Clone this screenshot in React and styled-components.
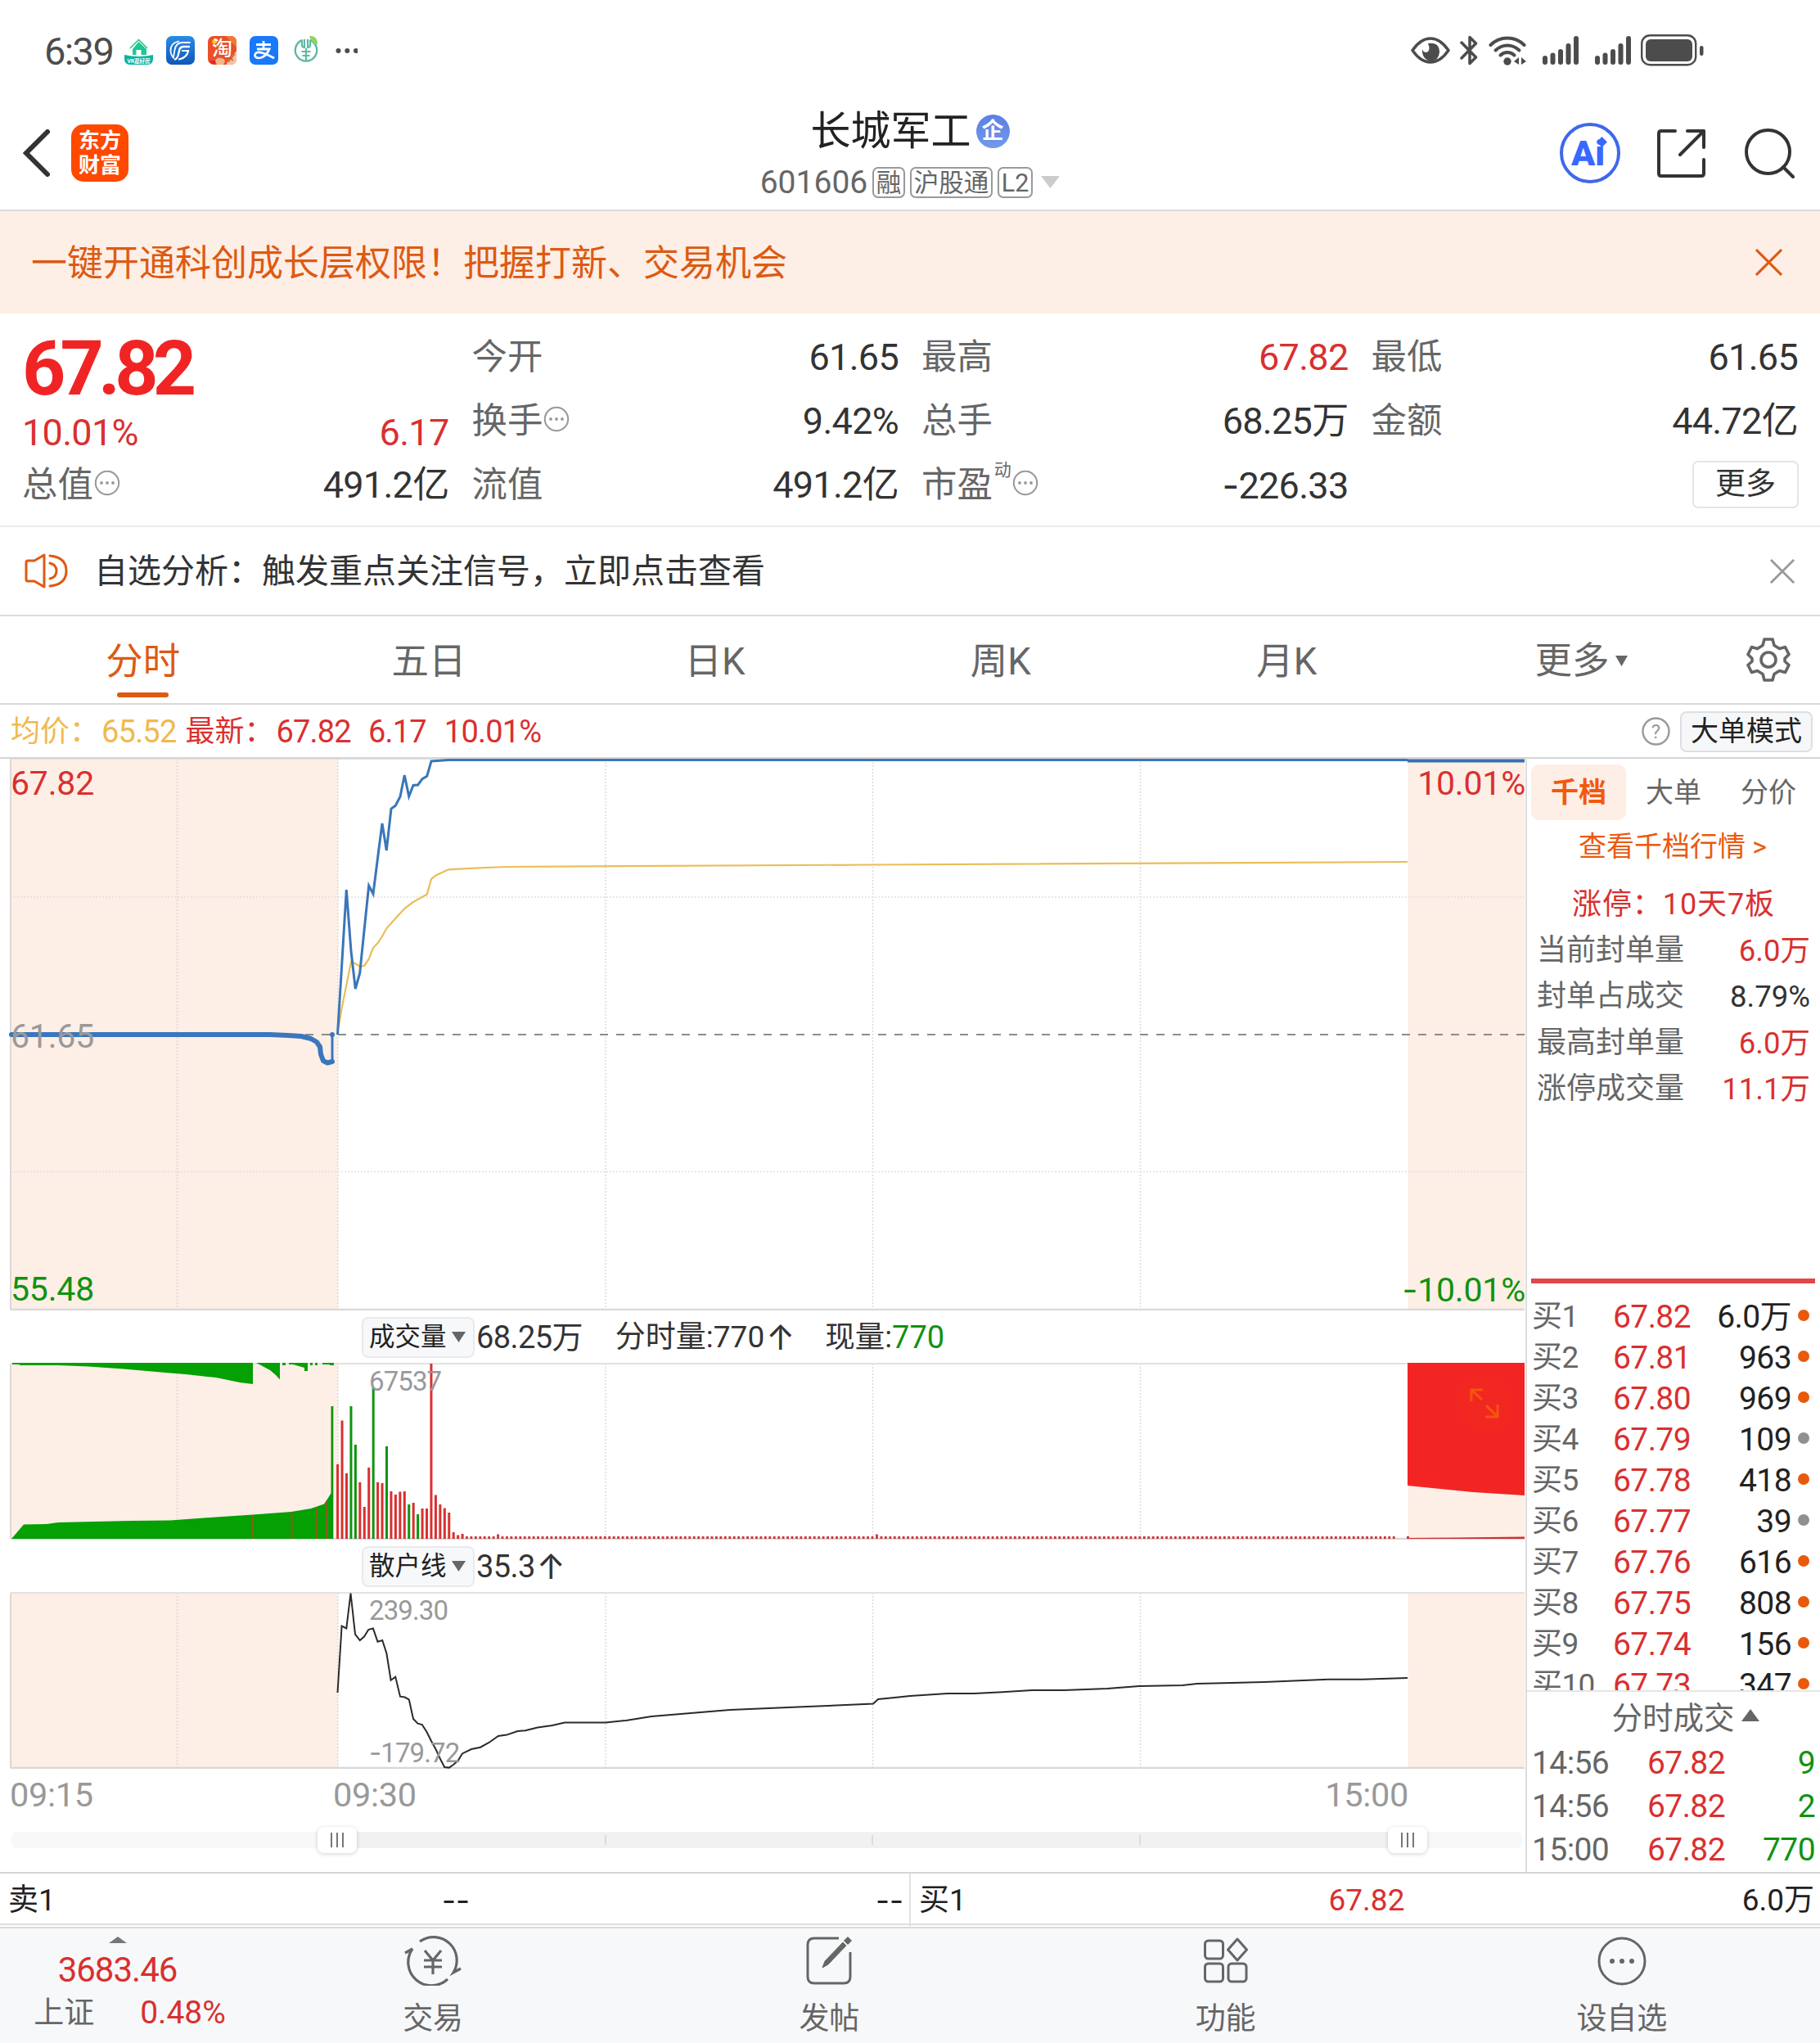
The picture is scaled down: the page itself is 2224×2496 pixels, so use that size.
import styled, { createGlobalStyle } from "styled-components";

const RED = "#d9302f";
const GREEN = "#0f930f";
const ORANGE = "#dd5a12";
const GREY = "#666";
const TINT = "#fdeee6";

const quoteCells = [
  [
    { label: "今开", value: "61.65" },
    { label: "最高", value: "67.82", color: RED },
    { label: "最低", value: "61.65" },
  ],
  [
    { label: "换手", value: "9.42%", more: true },
    { label: "总手", value: "68.25万" },
    { label: "金额", value: "44.72亿" },
  ],
];

const tabs = ["分时", "五日", "日K", "周K", "月K"];

const limitRows = [
  { label: "当前封单量", value: "6.0万", color: RED },
  { label: "封单占成交", value: "8.79%", color: "#333" },
  { label: "最高封单量", value: "6.0万", color: RED },
  { label: "涨停成交量", value: "11.1万", color: RED },
];

const bids = [
  ["买1", "67.82", "6.0万", 1],
  ["买2", "67.81", "963", 1],
  ["买3", "67.80", "969", 1],
  ["买4", "67.79", "109", 0],
  ["买5", "67.78", "418", 1],
  ["买6", "67.77", "39", 0],
  ["买7", "67.76", "616", 1],
  ["买8", "67.75", "808", 1],
  ["买9", "67.74", "156", 1],
  ["买10", "67.73", "347", 1],
];

const trades = [
  ["14:56", "67.82", "9"],
  ["14:56", "67.82", "2"],
  ["15:00", "67.82", "770"],
];

const priceLine =
  "412.5,1264 423.3,1087 429,1162 434.3,1208 439.7,1189 445,1137 450.7,1082 456,1092 461.7,1047 467,1006 472.3,1039 478,988 483.3,984.3 489,973.3 494.3,947 499.7,973 505,959.5 510.7,959 516,951.7 521.7,948.3 527,930 548,928.5 1720,928.5";
const avgLine =
  "413.7,1255 418,1230 423,1205 429,1175.3 434.3,1177.3 440,1181 445.3,1179.7 450.7,1171.7 456,1158 461.7,1152 467,1144 472.3,1134.3 483.3,1122 494.3,1110 505,1102 521.7,1092.7 527,1074 533,1069.3 548,1062.3 580,1060.7 620,1059 1067,1056.5 1720,1053";
const auctionLine =
  "14,1264 330,1264 352,1265 368,1266 380,1269 387,1273 391,1279 392,1288 395,1296 400,1298.5 406,1297";
const retailLine =
  "412.5,2068 417.6,1986.5 423.3,1989.4 428.5,1946.5 434,1996.7 439.8,2004 445,1999.6 450.2,1991 455.9,1989.4 461.5,2005.7 467.2,2004 472.4,2020 477.6,2052.7 483.2,2048.6 489,2072.7 494.6,2073.5 499.8,2076.3 505,2100 510.6,2105.7 515.8,2107 521.5,2116 526.7,2126.5 532.3,2136.7 538,2149 543.2,2159 548.8,2159.6 554,2156 559.7,2151 564.9,2142.4 576,2137 587,2134.7 597.5,2129 608.8,2121 619,2119.6 632.4,2115 642,2114.3 657,2110.6 675,2108 690,2104.5 740,2104.5 765,2102 796,2097 844,2093 892,2089 987,2085 1045,2082.5 1067,2081.5 1073,2076 1098,2073.5 1112,2072 1158,2069 1190,2069 1225,2067.3 1261,2065 1300,2065 1353,2063 1392,2060 1445,2059 1463,2057 1545,2055 1623,2051.7 1665,2051.7 1720,2050";

// opening minutes, tops of the bars; negative means a falling minute
const openBars = [
  1789, 1735.5, 1800, -1718, -1765, 1811, 1841, 1793, -1696, 1811, 1812, -1767,
  1822, 1826, 1822.5, 1822, -1838, 1836, -1850, 1843, 1843, 1666, 1826.5, 1838,
  1842.5, 1848, 1872, 1875.5, 1874,
];
const STEP = 5.446;
const gridX = [216.5, 413, 740, 1066.5, 1393.5];

const GlobalStyle = createGlobalStyle`
  * {
    box-sizing: border-box;
  }
  body {
    margin: 0;
    background: #fff;
    color: #333;
    font-family: Roboto, "Noto Sans CJK SC", sans-serif;
  }
  svg {
    display: block;
    flex: none;
  }
`;

const Page = styled.div`
  width: 2224px;
  height: 2496px;
  overflow: hidden;
  white-space: nowrap;
  background: #fff;
`;

const Text = styled.span`
  font-size: ${(p) => p.$size || 36}px;
  line-height: ${(p) => p.$line || 50}px;
  color: ${(p) => p.$color || "inherit"};
  font-weight: ${(p) => p.$weight || 400};
  letter-spacing: ${(p) => p.$track || 0}px;
`;

// Roboto's hyphen is too short for a minus sign
const Minus = styled.span`
  font-family: Inter, "DejaVu Sans", sans-serif;
`;

/* status bar */
const StatusBar = styled.div`
  display: flex;
  align-items: center;
  height: 118px;
  padding: 5px 142px 0 54px;
  color: #4c4c4c;
`;
const Clock = styled.div`
  width: 98px;
  padding-top: 2px;
  font-size: 47px;
  line-height: 50px;
  letter-spacing: -1.6px;
`;
const AppIcons = styled.div`
  display: flex;
  align-items: center;
  gap: 16px;
`;
const SysIcons = styled.div`
  display: flex;
  align-items: center;
  margin-left: auto;
`;
const Space = styled.i`
  width: ${(p) => p.$w}px;
  flex: none;
`;

/* title bar */
const Header = styled.header`
  display: grid;
  grid-template-columns: 1fr auto 1fr;
  align-items: center;
  height: 140px;
  border-bottom: 2px solid #d9d9d9;
`;
const HeaderLeft = styled.div`
  display: flex;
  align-items: center;
  gap: 26px;
  padding-left: 28px;
`;
const HeaderRight = styled.div`
  display: flex;
  align-items: center;
  justify-content: flex-end;
  padding-right: 31px;
`;
const Logo = styled.div`
  display: flex;
  flex-direction: column;
  align-items: center;
  justify-content: center;
  width: 70px;
  height: 70px;
  border-radius: 15px;
  background: #ff4800;
  color: #fff;
  font-size: 26px;
  font-weight: 700;
  line-height: 30px;
`;
const Title = styled.div`
  padding-top: 9px;
`;
const TitleRow = styled.div`
  display: flex;
  align-items: center;
  justify-content: center;
  height: 62px;
`;
const Badge = styled.span`
  width: 41px;
  height: 41px;
  margin: 0 0 0 6px;
  border-radius: 50%;
  background: linear-gradient(#5a80e6, #7199ea);
  color: #fff;
  font-size: 27px;
  font-weight: 700;
  line-height: 41px;
  text-align: center;
`;
const Tag = styled.span`
  height: 38px;
  margin-left: 5.5px;
  padding: 0 3px;
  border: 2px solid #999;
  border-radius: 7px;
  font-size: 30.5px;
  line-height: 35px;
  color: ${GREY};
`;

/* banner and notice */
const Banner = styled.div`
  display: flex;
  align-items: center;
  justify-content: space-between;
  height: 125px;
  padding: 0 46px 0 38px;
  background: ${TINT};
`;
const BannerText = styled(Text)`
  padding-top: 3px;
`;
const Notice = styled.div`
  display: flex;
  align-items: center;
  height: 109px;
  padding: 0 31px 0 30px;
  border-bottom: 2px solid #dcdcdc;
`;
const NoticeText = styled(Text)`
  flex: 1;
  margin-left: 31px;
`;

/* quote block */
const Quote = styled.section`
  display: grid;
  grid-template-columns: repeat(4, 1fr);
  grid-template-rows: repeat(3, 78px);
  column-gap: 28px;
  height: 261px;
  padding: 14px 27px 0;
  border-bottom: 2px solid #ececec;
`;
const Latest = styled.div`
  grid-row: span 2;
  display: flex;
  flex-direction: column;
`;
const LatestPrice = styled.div`
  height: 104px;
  font-size: 93px;
  font-weight: 700;
  line-height: 107px;
  letter-spacing: -6.8px;
  color: #f02424;
`;
const Cell = styled.div`
  display: flex;
  align-items: center;
  justify-content: space-between;
  height: ${(p) => p.$h || 78}px;
  padding-top: 2px;
`;
const Label = styled.span`
  display: flex;
  align-items: center;
  gap: 1px;
  font-size: 43.4px;
  line-height: 60px;
  color: ${GREY};
`;
const Value = styled.span`
  font-size: 45px;
  line-height: 60px;
  letter-spacing: -0.7px;
  color: ${(p) => p.$color || "#333"};
`;
const Dynamic = styled.sup`
  align-self: flex-start;
  margin: -4px 0 0 1px;
  font-size: 21px;
  line-height: 30px;
`;
const MoreButton = styled.button`
  width: 130px;
  height: 58px;
  margin: -2px -1px 0 auto;
  padding: 0;
  border: 2px solid #e5e5e5;
  border-radius: 7px;
  background: #fff;
  color: #333;
  font: 37px/52px Roboto, "Noto Sans CJK SC", sans-serif;
`;

/* period tabs */
const Tabs = styled.nav`
  display: flex;
  height: 108px;
  border-bottom: 2px solid #d9d9d9;
`;
const Tab = styled.div`
  display: flex;
  flex-direction: column;
  align-items: center;
  width: 349.4px;
  padding-top: 26px;
  font-size: 45.5px;
  line-height: 60px;
  color: ${(p) => (p.$active ? ORANGE : GREY)};
  &::after {
    content: "";
    width: 63px;
    height: 6px;
    margin-top: 7px;
    border-radius: 3px;
    background: ${(p) => (p.$active ? ORANGE : "none")};
  }
`;
const MoreTab = styled.div`
  display: flex;
  align-items: center;
  justify-content: center;
  gap: 8px;
  width: 351px;
  padding: 3px 0 0 20px;
  font-size: 45.5px;
  line-height: 60px;
  color: ${GREY};
`;
const GearBox = styled.div`
  display: flex;
  flex: 1;
  align-items: center;
  justify-content: center;
`;

const Info = styled.div`
  display: flex;
  align-items: center;
  height: 66px;
  padding: 1px 9px 0 13px;
  border-bottom: 2px solid #d6d6d6;
`;
const InfoItem = styled(Text)`
  margin-right: ${(p) => p.$gap || 0}px;
`;
const ModeButton = styled.button`
  width: 162px;
  height: 50px;
  margin-left: 12px;
  padding: 0;
  border: 2px solid #dedfe2;
  border-radius: 8px;
  background: #f6f7f9;
  color: #222;
  font: 34px/45px Roboto, "Noto Sans CJK SC", sans-serif;
`;

/* chart column */
const Body = styled.main`
  display: flex;
  height: 1362px;
  border-bottom: 2px solid #d6d6d6;
`;
const Charts = styled.div`
  width: 1864px;
`;
const ChartBox = styled.div`
  position: relative;
  height: ${(p) => p.$h}px;
`;
const ChartLabel = styled.span`
  position: absolute;
  left: ${(p) => (p.$right ? "auto" : p.$left + "px")};
  right: ${(p) => (p.$right ? "0" : "auto")};
  top: ${(p) => p.$top}px;
  font-size: ${(p) => p.$size || 41}px;
  line-height: 40px;
  letter-spacing: ${(p) => (p.$size ? -0.9 : -0.2)}px;
  color: ${(p) => p.$color || "#999"};
`;
const ChartBar = styled.div`
  display: flex;
  align-items: center;
  height: 64px;
  padding: 1px 0 0 442px;
  font-size: 38px;
  line-height: 50px;
  letter-spacing: -0.6px;
`;
const Picker = styled.div`
  display: flex;
  align-items: center;
  justify-content: space-between;
  width: 138px;
  height: 50px;
  margin-right: 2px;
  padding: 0 9px 0 7px;
  border: 2px solid #e8eaee;
  border-radius: 8px;
  background: #f7f8fa;
  color: #222;
  font-size: 31.5px;
  letter-spacing: 0;
`;
const Up = styled.span`
  width: 28px;
  margin-left: 2px;
  font-family: Inter, "DejaVu Sans", sans-serif;
  font-size: 42px;
  text-align: center;
`;
const Axis = styled.div`
  display: grid;
  grid-template-columns: 395px 1fr auto;
  height: 62px;
  padding: 0 143px 0 12px;
  font-size: 41.5px;
  line-height: 63px;
  letter-spacing: -0.3px;
  color: #999;
`;
const Slider = styled.div`
  display: flex;
  align-items: center;
  height: 20px;
  margin: 15px 4px 0 14px;
  border-radius: 7px;
  background: #f7f8fa;
`;
const Selected = styled.div`
  display: flex;
  align-items: center;
  justify-content: space-between;
  width: 1356px;
  height: 20px;
  margin-left: 374px;
  background: linear-gradient(#f1f1f3, #f1f1f3) center / 1310px 20px no-repeat;
`;
const Ticks = styled.div`
  display: flex;
  justify-content: space-between;
  width: 655px;
  i {
    width: 2px;
    height: 12px;
    background: #dcdcde;
  }
`;
const Handle = styled.div`
  display: flex;
  align-items: center;
  justify-content: center;
  gap: 5px;
  width: 48px;
  height: 32px;
  border-radius: 8px;
  background: #fff;
  box-shadow: 0 1px 5px rgba(0, 0, 0, 0.18);
  i {
    width: 2px;
    height: 18px;
    background: #777;
  }
`;

/* order book */
const Side = styled.aside`
  display: flex;
  flex-direction: column;
  width: 360px;
  padding-top: 7px;
  border-left: 2px solid #dcdcdc;
`;
const SideTabs = styled.div`
  display: flex;
  padding-left: 5px;
`;
const SideTab = styled.div`
  width: 116px;
  height: 68px;
  border-radius: 10px;
  background: ${(p) => (p.$active ? TINT : "none")};
  color: ${(p) => (p.$active ? "#f2590d" : GREY)};
  font-size: 34px;
  font-weight: ${(p) => (p.$active ? 700 : 400)};
  line-height: 69px;
  text-align: center;
`;
const SideLink = styled.div`
  height: 62px;
  padding-right: 2px;
  font-size: 34px;
  line-height: 64px;
  text-align: center;
  color: #ea5a10;
`;
const LimitTitle = styled.div`
  height: 69px;
  padding-top: 3px;
  font-size: 36px;
  line-height: 77px;
  letter-spacing: 0.9px;
  text-align: center;
  color: ${RED};
`;
const LimitRow = styled.div`
  display: flex;
  justify-content: space-between;
  height: 56.3px;
  padding: 0 12px 0 12px;
  font-size: 36px;
  line-height: 57px;
  color: ${GREY};
`;
const RedBar = styled.div`
  height: 6px;
  margin: auto 6px 0 5px;
  background: #e04848;
`;
const BidList = styled.div`
  height: 499px;
  padding-top: 16px;
  overflow: hidden;
  border-bottom: 2px solid #e6e6e6;
`;
const BidRow = styled.div`
  display: grid;
  grid-template-columns: 99px 95px 1fr 14px;
  align-items: center;
  height: 50px;
  padding: 0 13px 0 6px;
  font-size: 39px;
  line-height: 50px;
  letter-spacing: -0.6px;
  color: ${GREY};
`;
const BidName = styled.span`
  font-size: 37px;
`;
const Price = styled.span`
  color: ${RED};
`;
const Qty = styled.span`
  padding-right: 8px;
  color: #222;
  text-align: right;
`;
const Dot = styled.i`
  width: 14px;
  height: 14px;
  margin-top: -5px;
  border-radius: 50%;
  background: ${(p) => (p.$on ? "#e85a0a" : "#909094")};
`;
const TradeTitle = styled.div`
  display: flex;
  align-items: center;
  justify-content: center;
  gap: 8px;
  height: 61px;
  padding: 0 0 5px 29px;
  font-size: 37.5px;
  color: ${GREY};
`;
const TradeRow = styled.div`
  display: grid;
  grid-template-columns: 141px 1fr auto;
  height: 53px;
  padding: 0 6px 0 6px;
  font-size: 39px;
  line-height: 53px;
  letter-spacing: -0.6px;
  color: ${GREY};
`;
const TradeQty = styled.span`
  color: ${GREEN};
`;

/* best bid / ask strip */
const Strip = styled.div`
  display: flex;
  height: 67px;
  border-bottom: 2px solid #d9dadc;
`;
const StripHalf = styled.div`
  display: grid;
  grid-template-columns: 1fr 1fr 1fr;
  flex: 1;
  height: 63px;
  padding: 0 7px 0 10px;
  border-bottom: 2px solid #dedede;
  font-size: 37px;
  line-height: 66px;
  color: #222;
  & + & {
    height: 67px;
    border-left: 2px solid #e2e2e2;
    border-bottom: 0;
    background: linear-gradient(#dedede, #dedede) 0 61px / 100% 2px no-repeat;
  }
  > span:nth-child(2) {
    text-align: center;
  }
  > span:nth-child(3) {
    text-align: right;
  }
`;

/* bottom bar */
const BottomBar = styled.footer`
  display: flex;
  height: 142px;
  background: #f7f8fa;
`;
const IndexBox = styled.div`
  display: flex;
  flex-direction: column;
  align-items: center;
  width: 287px;
  padding-top: 10px;
`;
const IndexRow = styled.div`
  display: flex;
  gap: 56px;
  padding: 0 0 0 30px;
`;
const NavItem = styled.div`
  display: flex;
  flex-direction: column;
  align-items: center;
  flex: 1;
  padding-top: 8px;
  font-size: 37px;
  line-height: 50px;
  color: ${GREY};
  svg {
    margin-bottom: 16px;
  }
`;

const Triangle = ({ w, h, color, up }) => (
  <svg width={w} height={h} viewBox="0 0 10 10" preserveAspectRatio="none">
    <path d={up ? "M5 0L10 10H0Z" : "M0 0H10L5 10Z"} fill={color} />
  </svg>
);

const Cross = ({ size, color }) => (
  <svg width={size} height={size} viewBox="0 0 32 32">
    <path d="M1 1L31 31M31 1L1 31" stroke={color} strokeWidth="3" />
  </svg>
);

const DotsIcon = styled.svg`
  margin-top: -6px;
`;

const MoreDots = () => (
  <DotsIcon width="32" height="32" viewBox="0 0 31 32">
    <circle cx="15.5" cy="16" r="14.2" fill="none" stroke="#999" strokeWidth="2" />
    <g fill="#999">
      <circle cx="8.5" cy="16" r="1.9" />
      <circle cx="15.5" cy="16" r="1.9" />
      <circle cx="22.5" cy="16" r="1.9" />
    </g>
  </DotsIcon>
);

const Signal = () => (
  <svg width="44" height="35" viewBox="0 0 44 35" fill="#4c4c4c">
    <rect x="0" y="24" width="6" height="11" rx="3" />
    <rect x="9.5" y="20.5" width="6" height="14.5" rx="3" />
    <rect x="19" y="16" width="6" height="19" rx="3" />
    <rect x="28.5" y="9" width="6" height="26" rx="3" />
    <rect x="38" y="0" width="6" height="35" rx="3" />
  </svg>
);

const StatusApps = () => (
  <AppIcons>
    <svg width="35" height="35" viewBox="0 0 35 35">
      <path d="M7 15L17.5 4.5L28 15" fill="none" stroke="#25c08c" strokeWidth="1.5" />
      <path d="M17.5 7L27 16V23H20.5V17H14.5V23H10V16Z" fill="#1fc795" />
      <path d="M0 23Q17.5 27 35 23V28Q35 35 28 35H7Q0 35 0 28Z" fill="#10b39f" />
      <text x="17.5" y="33" fontSize="6.5" fontWeight="700" fill="#fff" textAnchor="middle">
        VR逛好房
      </text>
    </svg>
    <svg width="35" height="35" viewBox="0 0 35 35">
      <defs>
        <linearGradient id="gf" x1="0" y1="0" x2="0" y2="1">
          <stop offset="0" stopColor="#2a8be8" />
          <stop offset="1" stopColor="#1058b8" />
        </linearGradient>
      </defs>
      <rect width="35" height="35" rx="7" fill="url(#gf)" />
      <g fill="none" stroke="#fff" strokeLinecap="round">
        <path d="M15 6.5Q5 9 5.500 18Q6 24 9 26.500Q9.500 22 10.500 17Q12 8.500 19 8H29" strokeWidth="1.800" />
        <path d="M28 13H21Q16.500 13.500 16 18L14.500 24Q13.500 27.500 11 28.500" strokeWidth="2.400" />
        <path d="M20 18H27Q26 26 16 28.500" strokeWidth="2.200" />
      </g>
    </svg>
    <svg width="35" height="35" viewBox="0 0 35 35">
      <rect width="35" height="35" rx="7" fill="#ea5026" />
      <path d="M22 0H28Q35 0 35 7V14Z" fill="#f37a35" />
      <circle cx="8" cy="7" r="2.8" fill="#ffc51f" />
      <text x="17.5" y="24" fontSize="25" fontWeight="500" fill="#fff" textAnchor="middle">
        淘
      </text>
      <path d="M9 30Q12 25 16 27Q20 27 21 31L19 35H11Z" fill="#f4b68c" />
      <path d="M2 30H9V34H5Z" fill="#e6213a" />
      <path d="M23 33L35 18V28Q35 34 28 35H23Z" fill="#f8c29f" />
      <path d="M25 32L33 22M27 26L31 30" stroke="#b5562c" strokeWidth="1.2" />
    </svg>
    <svg width="35" height="35" viewBox="0 0 35 35">
      <rect width="35" height="35" rx="7" fill="#1a78fb" />
      <g fill="none" stroke="#fff" strokeWidth="2.8">
        <path d="M8 10.5H26M17 6V16M9 16H24Q21 24 14 26.500Q7 28 6.500 23.500Q7 19 13 20Q20 21.500 30 27" />
      </g>
    </svg>
    <svg width="35" height="35" viewBox="0 0 35 35">
      <g fill="none" stroke="#5fb9a4">
        <path d="M13.500 5A13.200 13.200 0 1 0 22.500 5" strokeWidth="2.4" />
        <path d="M13 5V11Q13 14 16 14V4M23 5V11Q23 14 20 14V4M12.500 19H23.500M13.500 24H22.500M18 15V30" strokeWidth="2.2" />
      </g>
      <path d="M22 0Q32 -1 32 10Q25 10 22 0Z" fill="#8fd460" />
    </svg>
    <svg width="30" height="35" viewBox="0 0 30 35" fill="#4c4c4c">
      <circle cx="6.5" cy="18" r="3" />
      <circle cx="17.3" cy="18" r="3" />
      <circle cx="28" cy="18" r="3" />
    </svg>
  </AppIcons>
);

const StatusSystem = () => (
  <SysIcons>
    <svg width="48" height="33" viewBox="0 0 48 33">
      <path d="M2 16.5Q12 2 24 2T46 16.5Q36 31 24 31T2 16.5Z" fill="none" stroke="#4c4c4c" strokeWidth="3.4" />
      <path d="M14 15Q15 19 19 19Q25 17 21 8Q35 6 35 19Q34 29 24.5 30Q13 27 14 15Z" fill="#4c4c4c" />
    </svg>
    <Space $w={12} />
    <svg width="22" height="37" viewBox="0 0 22 37">
      <path d="M2 9L19.5 27L12 34.5V2.5L19.5 10L2 28" fill="none" stroke="#4c4c4c" strokeWidth="3.5" strokeLinecap="round" strokeLinejoin="round" />
    </svg>
    <Space $w={13} />
    <svg width="46" height="36" viewBox="0 0 46 36">
      <g fill="none" stroke="#4c4c4c" strokeWidth="4" strokeLinecap="round">
        <path d="M2.5 11Q11 2.5 23 2.5T43.5 11" />
        <path d="M8.5 17.5Q15 11.5 23 11.5T37.5 17.5" />
        <path d="M14.5 23.5Q18 20 23 20T31.5 23.5" />
      </g>
      <circle cx="23" cy="31" r="4.7" fill="#4c4c4c" />
      <path d="M31 31L37 26V35ZM46 31L40 26V35Z" fill="#4c4c4c" />
    </svg>
    <Space $w={19.5} />
    <Signal />
    <Space $w={20} />
    <Signal />
    <Space $w={12.5} />
    <svg width="77" height="39" viewBox="0 0 77 39">
      <rect x="1.2" y="1.2" width="66" height="36" rx="10" fill="none" stroke="#4c4c4c" strokeWidth="2.4" />
      <rect x="6" y="6" width="57" height="27" rx="6" fill="#4c4c4c" />
      <rect x="72" y="14" width="4.5" height="12" rx="2.2" fill="#4c4c4c" />
    </svg>
  </SysIcons>
);

const Gear = () => (
  <svg width="54" height="54" viewBox="0 0 54 54" fill="none" stroke={GREY} strokeWidth="3.6" strokeLinejoin="round">
    <path d="M22 2H32L34 9.5L40.5 13.5L47.5 11.5L52 20.5L47 25.5V29L52 33.5L47.5 42.5L40.5 40.5L34 44.5L32 52H22L20 44.5L13.5 40.5L6.5 42.5L2 33.5L7 29V25.5L2 20.5L6.5 11.5L13.5 13.5L20 9.5Z" />
    <circle cx="27" cy="27" r="9" />
  </svg>
);

const HelpIcon = styled.svg`
  margin-left: auto;
`;

const Grid = ({ top, bottom }) => (
  <>
    <rect x="13" y={top} width="400" height={bottom - top} fill={TINT} />
    <rect x="1720.5" y={top} width="142.5" height={bottom - top} fill={TINT} />
    <path
      d={gridX.map((x) => `M${x} ${top}V${bottom}`).join("")}
      stroke="#dedad8"
      strokeWidth="1.5"
      strokeDasharray="2 2"
    />
    <path d={`M13 ${top}V${bottom}`} stroke="#dcd8d6" strokeWidth="2" />
    <path d={`M13 ${top}H1863`} stroke="#e2e2e2" strokeWidth="2" />
    <path d={`M13 ${bottom}H1863`} stroke="#d8d8d8" strokeWidth="2.5" />
  </>
);

const PriceChart = () => (
  <ChartBox $h={674}>
    <svg width="1864" height="674" viewBox="0 927 1864 674">
      <Grid top={927} bottom={1600} />
      <path d="M13 1096H1863M13 1431.5H1863" stroke="#e4e0de" strokeWidth="1.5" strokeDasharray="2 2" />
      <path d="M13 1264H1863" stroke="#8c8c8c" strokeWidth="2" strokeDasharray="10 10" />
      <polyline points={avgLine} fill="none" stroke="#ebbd58" strokeWidth="2.2" />
      <polyline points={priceLine} fill="none" stroke="#3a76b8" strokeWidth="3" />
      <path d="M1720 929.5H1863" stroke="#3a70b0" strokeWidth="4" />
      <polyline points={auctionLine} fill="none" stroke="#3a76bd" strokeWidth="6" strokeLinecap="round" strokeLinejoin="round" />
      <path d="M406 1297V1264" stroke="#3a76bd" strokeWidth="3" />
      <circle cx="406" cy="1264" r="3" fill="#3a76bd" />
    </svg>
    <ChartLabel $left={13} $top={10} $color={RED}>67.82</ChartLabel>
    <ChartLabel $left={13} $top={319}>61.65</ChartLabel>
    <ChartLabel $left={13} $top={628} $color={GREEN}>55.48</ChartLabel>
    <ChartLabel $right $top={10} $color={RED}>10.01%</ChartLabel>
    <ChartLabel $right $top={628} $color={GREEN}>
      <Minus>-</Minus>10.01%
    </ChartLabel>
  </ChartBox>
);

const VolumeChart = () => {
  const flat = [];
  for (let i = openBars.length; 412.5 + STEP * i < 1706; i++) {
    flat.push({ x: 412.5 + STEP * i, y: i === 36 || i === 121 ? 1874.5 : 1877 });
  }
  return (
    <ChartBox $h={216}>
      <svg width="1864" height="216" viewBox="0 1665 1864 216">
        <Grid top={1666} bottom={1880} />
        <g fill="#04a004">
          <path d="M15 1665H309V1691L293 1689L264 1683L227 1679L208 1677.5L151 1672.6L108 1669.5L71 1668L24 1668V1667H15Z" />
          <path d="M313 1665H342V1685.5L337 1680L330 1674L317 1667Z" />
          <path d="M345 1665H349V1668H345ZM353 1665H376V1675H372V1671L358 1667H353ZM379 1665H382V1668H379ZM385 1665H388V1668H385ZM394 1665H408V1668H403V1667H394Z" />
          <path d="M14 1880L29 1862.4L57 1862L71 1860L160 1858L208 1857.5L264 1853.5L309 1850.6L356 1847L380 1843L396 1837.5L401 1830L404 1825H407V1880Z" />
        </g>
        <path d="M309 1851V1880M356.5 1847V1880M387 1841V1880M399 1834V1880" stroke="#84601a" strokeWidth="2" />
        <rect x="404.5" y="1718" width="2.8" height="162" fill={GREEN} />
        {openBars.map((v, i) => (
          <rect key={i} x={411.1 + STEP * i} y={Math.abs(v)} width="3" height={1880 - Math.abs(v)} fill={v < 0 ? GREEN : RED} />
        ))}
        {flat.map((b) => (
          <rect key={b.x} x={b.x - 1.4} y={b.y} width="2.8" height={1880 - b.y} fill="#cf3434" />
        ))}
        <path d="M1720 1665H1863V1827L1800 1823L1760 1819L1720 1815Z" fill="#f32424" />
        <path d="M1719 1877H1722V1879L1863 1877.5V1880H1719Z" fill="#d03030" />
        <circle cx="1814" cy="1715" r="34" fill="#f32722" />
        <path d="M1811 1710L1798 1698M1798 1712V1698H1812M1816 1717L1830 1731M1830 1716V1731H1815" fill="none" stroke="#f2560f" strokeWidth="3" />
      </svg>
      <ChartLabel $left={451} $top={3} $size={33}>67537</ChartLabel>
    </ChartBox>
  );
};

const RetailChart = () => (
  <ChartBox $h={216}>
    <svg width="1864" height="216" viewBox="0 1945 1864 216">
      <Grid top={1946} bottom={2160} />
      <polyline points={retailLine} fill="none" stroke="#2a2a2a" strokeWidth="2" />
    </svg>
    <ChartLabel $left={451} $top={3} $size={33}>239.30</ChartLabel>
    <ChartLabel $left={451} $top={176} $size={33}>
      <Minus>-</Minus>179.72
    </ChartLabel>
  </ChartBox>
);

const OrderBook = () => (
  <Side>
    <SideTabs>
      <SideTab $active>千档</SideTab>
      <SideTab>大单</SideTab>
      <SideTab>分价</SideTab>
    </SideTabs>
    <SideLink>查看千档行情 &gt;</SideLink>
    <LimitTitle>涨停：10天7板</LimitTitle>
    {limitRows.map((r) => (
      <LimitRow key={r.label}>
        <span>{r.label}</span>
        <Text $size={36.5} $line={57} $color={r.color}>{r.value}</Text>
      </LimitRow>
    ))}
    <RedBar />
    <BidList>
      {bids.map(([name, price, qty, on]) => (
        <BidRow key={name}>
          <BidName>{name}</BidName>
          <Price>{price}</Price>
          <Qty>{qty}</Qty>
          <Dot $on={on} />
        </BidRow>
      ))}
    </BidList>
    <TradeTitle>
      分时成交
      <Triangle w={22} h={15} color={GREY} up />
    </TradeTitle>
    {trades.map(([time, price, qty], i) => (
      <TradeRow key={i}>
        <span>{time}</span>
        <Price>{price}</Price>
        <TradeQty>{qty}</TradeQty>
      </TradeRow>
    ))}
  </Side>
);

const Grip = () => (
  <Handle>
    <i />
    <i />
    <i />
  </Handle>
);

export default function App() {
  return (
    <Page>
      <GlobalStyle />
      <StatusBar>
        <Clock>6:39</Clock>
        <StatusApps />
        <StatusSystem />
      </StatusBar>

      <Header>
        <HeaderLeft>
          <svg width="33" height="58" viewBox="0 0 33 58">
            <path d="M30 3L4 29L30 55" fill="none" stroke="#333" strokeWidth="6" strokeLinecap="round" />
          </svg>
          <Logo>
            <span>东方</span>
            <span>财富</span>
          </Logo>
        </HeaderLeft>
        <Title>
          <TitleRow>
            <Text $size={49} $line={62} $color="#222">长城军工</Text>
            <Badge>企</Badge>
          </TitleRow>
          <TitleRow>
            <Text $size={39} $color={GREY}>601606</Text>
            <Tag>融</Tag>
            <Tag>沪股通</Tag>
            <Tag>L2</Tag>
            <Space $w={10} />
            <Triangle w={23} h={15} color="#ccc" />
          </TitleRow>
        </Title>
        <HeaderRight>
          <svg width="74" height="74" viewBox="0 0 74 74">
            <circle cx="37" cy="37" r="35" fill="none" stroke="#3f68ea" strokeWidth="4" />
            <text x="14" y="51.5" fontSize="43" fontWeight="900" fill="#3868ff">
              Ai
            </text>
            <path d="M51.5 17L58 23.500L51.5 30L45 23.500Z" fill="#3868ff" />
          </svg>
          <Space $w={45} />
          <svg width="59" height="59" viewBox="0 0 59 59" fill="none" stroke="#333" strokeWidth="4" strokeLinecap="round" strokeLinejoin="round">
            <path d="M22 2H5Q2 2 2 5V54Q2 57 5 57H54Q57 57 57 54V37" />
            <path d="M37 2H57V22M57 2L28 31" />
          </svg>
          <Space $w={48} />
          <svg width="61" height="61" viewBox="0 0 61 61" fill="none" stroke="#333" strokeWidth="4" strokeLinecap="round">
            <circle cx="28.5" cy="28.5" r="26.5" />
            <path d="M47 47L59 59" />
          </svg>
        </HeaderRight>
      </Header>

      <Banner>
        <BannerText $size={44} $line={60} $color={ORANGE}>一键开通科创成长层权限！把握打新、交易机会</BannerText>
        <Cross size={33} color={ORANGE} />
      </Banner>

      <Quote>
        <Latest>
          <LatestPrice>67.82</LatestPrice>
          <Cell $h={54}>
            <Value $color={RED}>10.01%</Value>
            <Value $color={RED}>6.17</Value>
          </Cell>
        </Latest>
        {quoteCells.flat().map((c) => (
          <Cell key={c.label}>
            <Label>
              {c.label}
              {c.more && <MoreDots />}
            </Label>
            <Value $color={c.color}>{c.value}</Value>
          </Cell>
        ))}
        <Cell>
          <Label>
            总值
            <MoreDots />
          </Label>
          <Value>491.2亿</Value>
        </Cell>
        <Cell>
          <Label>流值</Label>
          <Value>491.2亿</Value>
        </Cell>
        <Cell>
          <Label>
            市盈<Dynamic>动</Dynamic>
            <MoreDots />
          </Label>
          <Value>
            <Minus>-</Minus>226.33
          </Value>
        </Cell>
        <Cell>
          <MoreButton>更多</MoreButton>
        </Cell>
      </Quote>

      <Notice>
        <svg width="54" height="43" viewBox="0 0 54 43" fill="none" stroke={ORANGE} strokeWidth="3" strokeLinejoin="round">
          <path d="M2 11Q2 9 4 9H12L24 2V41L12 34H4Q2 34 2 32Z" />
          <path d="M31 12Q39 14 39 21.5T31 31M31 3Q51 5 51 21.5T31 40" strokeLinecap="round" />
        </svg>
        <NoticeText $size={41}>自选分析：触发重点关注信号，立即点击查看</NoticeText>
        <Cross size={30} color="#999" />
      </Notice>

      <Tabs>
        {tabs.map((t, i) => (
          <Tab key={t} $active={i === 0}>{t}</Tab>
        ))}
        <MoreTab>
          更多
          <Triangle w={15} h={13} color={GREY} />
        </MoreTab>
        <GearBox>
          <Gear />
        </GearBox>
      </Tabs>

      <Info>
        <InfoItem $color="#f0b94e" $gap={3}>均价：</InfoItem>
        <InfoItem $size={38} $track={-0.8} $color="#f0b94e" $gap={11}>65.52</InfoItem>
        <InfoItem $color={RED} $gap={3}>最新：</InfoItem>
        <InfoItem $size={38} $track={-0.8} $color={RED} $gap={21}>67.82</InfoItem>
        <InfoItem $size={38} $track={-0.8} $color={RED} $gap={22}>6.17</InfoItem>
        <InfoItem $size={38} $track={-0.8} $color={RED}>10.01%</InfoItem>
        <HelpIcon width="35" height="35" viewBox="0 0 35 35">
          <circle cx="17.5" cy="17.5" r="16" fill="none" stroke="#999" strokeWidth="2.4" />
          <text x="17.5" y="26" fontSize="24" fill="#999" textAnchor="middle">?</text>
        </HelpIcon>
        <ModeButton>大单模式</ModeButton>
      </Info>

      <Body>
        <Charts>
          <PriceChart />
          <ChartBar>
            <Picker>
              成交量
              <Triangle w={17} h={13} color={GREY} />
            </Picker>
            <span>68.25万</span>
            <Space $w={40} />
            <Text $size={37}>分时量:770</Text>
            <Up>↑</Up>
            <Space $w={44} />
            <Text $size={36.5}>现量:</Text>
            <Text $size={38} $color={GREEN}>770</Text>
          </ChartBar>
          <VolumeChart />
          <ChartBar>
            <Picker>
              散户线
              <Triangle w={17} h={13} color={GREY} />
            </Picker>
            <span>35.3</span>
            <Up>↑</Up>
          </ChartBar>
          <RetailChart />
          <Axis>
            <span>09:15</span>
            <span>09:30</span>
            <span>15:00</span>
          </Axis>
          <Slider>
            <Selected>
              <Grip />
              <Ticks>
                <i />
                <i />
                <i />
              </Ticks>
              <Grip />
            </Selected>
          </Slider>
        </Charts>
        <OrderBook />
      </Body>

      <Strip>
        <StripHalf>
          <span>卖1</span>
          <Minus>--</Minus>
          <Minus>--</Minus>
        </StripHalf>
        <StripHalf>
          <span>买1</span>
          <Price>67.82</Price>
          <span>6.0万</span>
        </StripHalf>
      </Strip>

      <BottomBar>
        <IndexBox>
          <Triangle w={22} h={8} color="#777" up />
          <Text $size={42} $line={66} $track={-1} $color={RED}>3683.46</Text>
          <IndexRow>
            <Text $size={37} $line={39} $color={GREY}>上证</Text>
            <Text $size={39} $line={38} $color={RED}>0.48%</Text>
          </IndexRow>
        </IndexBox>
        <NavItem>
          <svg width="70" height="62" viewBox="0 0 70 62" fill="none" stroke={GREY} strokeWidth="3.2">
            <path d="M19 8A28.500 28.500 0 0 1 60 46L69 41" />
            <path d="M53 54A28.500 28.500 0 0 1 10 17L1 22" />
            <path d="M25 19L35 31L45 19M35 31V48M24 31H46M24 39H46" />
          </svg>
          交易
        </NavItem>
        <NavItem>
          <svg width="56" height="62" viewBox="0 0 56 62" fill="none" stroke={GREY} strokeWidth="3">
            <path d="M40 4H10Q2 4 2 12V51Q2 59 10 59H46Q54 59 54 51V21" />
            <path d="M20 40L23 32L45 9L49 13L27 36Z" fill={GREY} strokeWidth="1" />
            <path d="M48 7L51 4L54 7L51 10Z" fill={GREY} />
          </svg>
          发帖
        </NavItem>
        <NavItem>
          <svg width="54" height="62" viewBox="0 0 54 62" fill="none" stroke={GREY} strokeWidth="3" strokeLinejoin="round">
            <rect x="1.5" y="7" width="22" height="22" rx="4" />
            <rect x="1.5" y="35" width="22" height="22" rx="4" />
            <rect x="30" y="35" width="22" height="22" rx="4" />
            <path d="M41 5L52.5 18L41 31L29.5 18Z" />
          </svg>
          功能
        </NavItem>
        <NavItem>
          <svg width="60" height="62" viewBox="0 0 60 62">
            <circle cx="30" cy="32" r="28" fill="none" stroke={GREY} strokeWidth="3" />
            <g fill={GREY}>
              <circle cx="18" cy="32" r="3" />
              <circle cx="30" cy="32" r="3" />
              <circle cx="42" cy="32" r="3" />
            </g>
          </svg>
          设自选
        </NavItem>
      </BottomBar>
    </Page>
  );
}
